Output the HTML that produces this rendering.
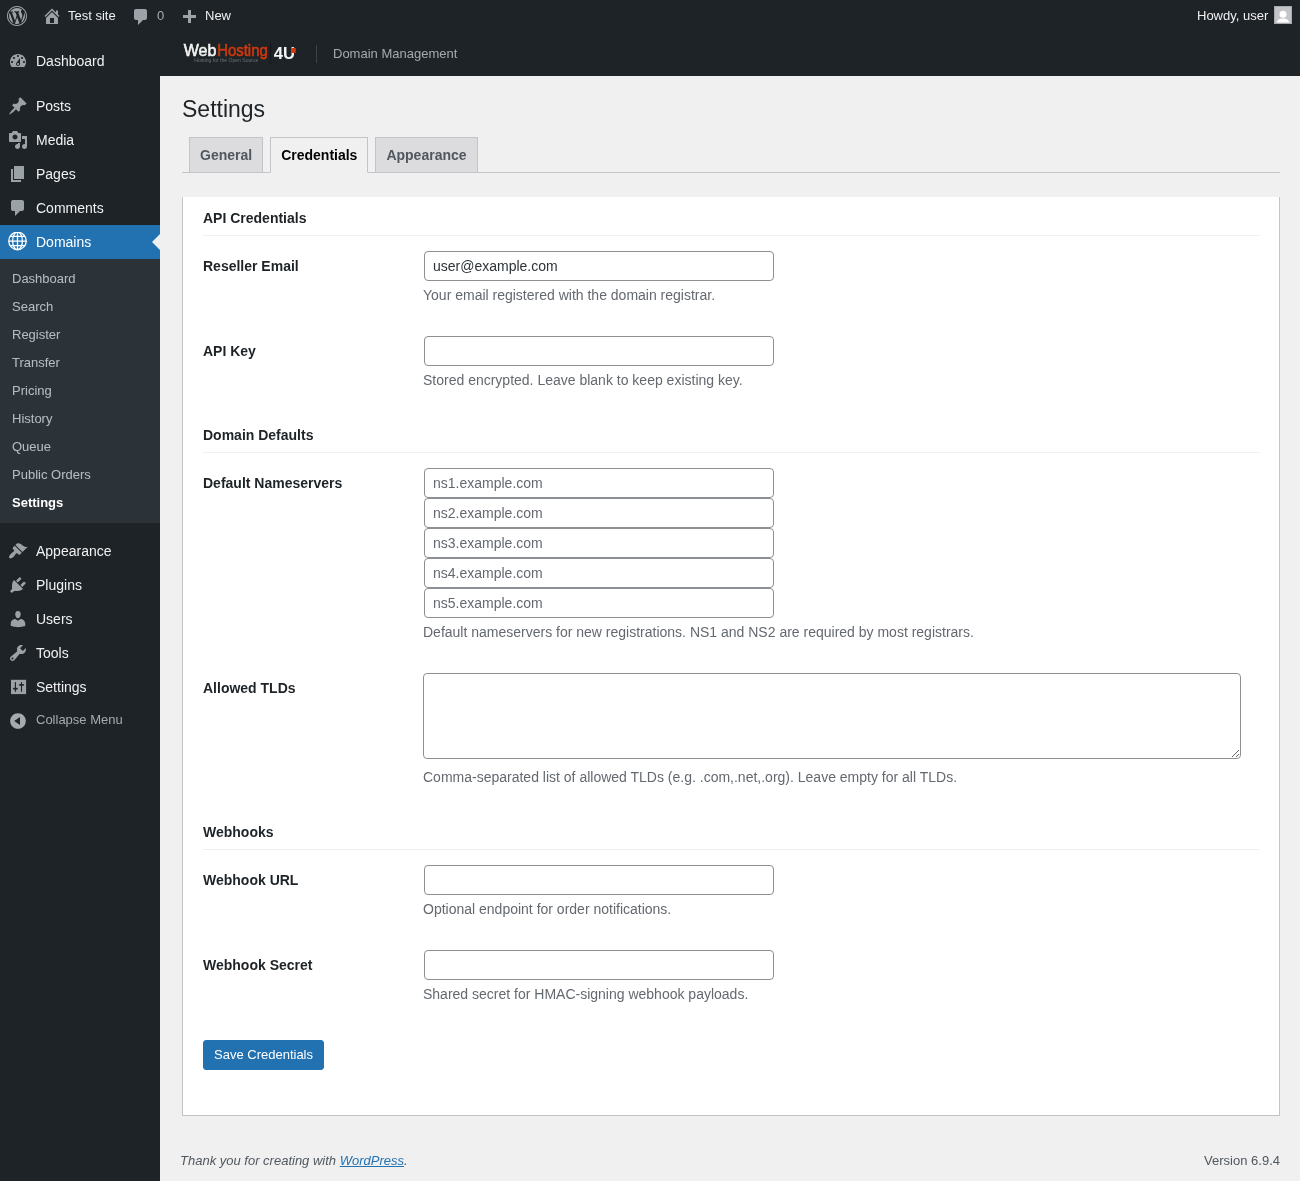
<!DOCTYPE html>
<html>
<head>
<meta charset="utf-8">
<style>
html,body{margin:0;padding:0}
body{will-change:transform;width:1300px;height:1181px;overflow:hidden;background:#f0f0f1;color:#3c434a;font-family:"Liberation Sans",sans-serif;font-size:13px;line-height:1.4em;position:relative}
/* admin bar */
#wpadminbar{position:absolute;left:0;top:0;width:1300px;height:32px;background:#1d2327;color:#f0f0f1;font-size:13px;line-height:32px}
#wpadminbar .ab{position:absolute;top:0;height:32px;white-space:nowrap}
#wpadminbar svg{position:absolute}
/* menu */
#adminmenuback{position:absolute;left:0;top:32px;width:160px;height:1149px;background:#1d2327}
#adminmenu{position:absolute;left:0;top:44px;width:160px;margin:0;padding:0;list-style:none}
#adminmenu li.menu-top{position:relative;min-height:34px}
#adminmenu a.menu-top{display:block;color:#f0f0f1;font-size:14px;line-height:18px;text-decoration:none;position:relative}
#adminmenu .wp-menu-image{position:absolute;left:0;top:0;width:36px;height:34px}
#adminmenu .wp-menu-image svg{position:absolute;left:8px;top:7px;width:20px;height:20px;fill:rgba(240,246,252,.6)}
#adminmenu .wp-menu-name{padding:8px 8px 8px 36px}
#adminmenu li.sep{height:5px;margin:0 0 6px}
#adminmenu li.current a.menu-top{background:#2271b1;color:#fff}
#adminmenu li.current .wp-menu-image svg{fill:#fff}
#adminmenu li.current a.menu-top:after{content:"";position:absolute;right:0;top:50%;margin-top:-8px;border:8px solid transparent;border-right-color:#f0f0f1}
#adminmenu ul.wp-submenu{list-style:none;margin:0;padding:6px 0 6px;background:#2c3338}
#adminmenu ul.wp-submenu a{display:block;font-size:13px;line-height:18px;padding:5px 12px;color:rgba(240,246,252,.7);text-decoration:none}
#adminmenu ul.wp-submenu li.current a{color:#fff;font-weight:600}
#collapse-menu{position:relative;color:#a7aaad;font-size:13px;line-height:34px;height:34px}
#collapse-menu svg{position:absolute;left:8px;top:7px;width:20px;height:20px;fill:#a7aaad}
#collapse-menu span{position:absolute;left:36px;top:-1px}
/* header bar */
#hdr{position:absolute;left:160px;top:32px;width:1140px;height:44px;background:#1d2327}
/* content */
#wrap{position:absolute;left:182px;top:86px;width:1098px}
h1{font-size:23px;font-weight:400;margin:0;padding:9px 0 4px;line-height:1.3;color:#1d2327}
.nav-tab-wrapper{border-bottom:1px solid #c3c4c7;margin:0;padding-top:8px;line-height:inherit;height:35px}
.nav-tab{float:left;border:1px solid #c3c4c7;border-bottom:none;margin-left:.5em;padding:5px 10px;font-size:14px;line-height:1.71428571;font-weight:600;background:#dcdcde;color:#50575e;text-decoration:none;white-space:nowrap}
.nav-tab-active{background:#f0f0f1;color:#000;border-bottom:1px solid #f0f0f1;margin-bottom:-1px}
.card{position:absolute;left:0;top:111px;width:1056px;background:#fff;border:1px solid #c3c4c7;border-top:none;padding:12px 20px 45px}
h2.sec{font-size:14px;font-weight:600;color:#1d2327;margin:20px 0 0;padding:0 0 8px;border-bottom:1px solid #f0f0f1;line-height:18px}
h2.sec.first{margin-top:0}
table.form-table{border-collapse:collapse;width:100%;margin:0}
.form-table th{width:200px;padding:21px 10px 20px 0;vertical-align:top;text-align:left;font-size:14px;font-weight:600;line-height:1.3;color:#1d2327}
.form-table td{padding:15px 10px;vertical-align:middle;line-height:1.3;font-size:14px}
input.regular-text{box-sizing:border-box;width:350px;height:30px;min-height:30px;margin:0 1px;padding:0 8px;border:1px solid #8c8f94;border-radius:4px;font-family:"Liberation Sans",sans-serif;font-size:14px;line-height:2;color:#2c3338;background:#fff;box-shadow:none;outline:none;display:block}
input::placeholder{color:#646970;opacity:1}
p.description{margin:4px 0 0;color:#646970;font-size:14px;line-height:1.5}
textarea{box-sizing:border-box;display:block;width:818px;height:86px;margin:0 0 8px;border:1px solid #8c8f94;border-radius:4px;padding:2px 6px;font-family:"Liberation Sans",sans-serif;font-size:14px;background:#fff}
.button-primary{display:inline-block;background:#2271b1;border:1px solid #2271b1;color:#fff;border-radius:3px;font-size:13px;line-height:2.15384615;min-height:30px;padding:0 10px;box-sizing:border-box;font-family:"Liberation Sans",sans-serif}
#footer{position:absolute;left:180px;top:1151px;width:1100px;font-size:13px;color:#50575e;line-height:1.55}
#footer a{color:#2271b1;text-decoration:underline}
</style>
</head>
<body>
<div id="wpadminbar">
  <svg style="left:7px;top:6px" width="20" height="20" viewBox="0 0 20 20" fill="#9ca2a7"><path d="M20 10c0-5.52-4.48-10-10-10S0 4.48 0 10s4.48 10 10 10 10-4.48 10-10zM10 1.01c4.96 0 8.99 4.02 8.99 8.99s-4.03 8.99-8.99 8.99S1.01 14.96 1.01 10 5.04 1.01 10 1.01zM8.010 14.82L4.96 6.61c.49-.03 1.05-.08 1.05-.08.43-.05.38-1.01-.06-.99 0 0-1.29.1-2.13.1-.15 0-.33 0-.52-.01 1.44-2.17 3.9-3.6 6.7-3.6 2.09 0 3.99.79 5.41 2.09-.6-.08-1.45.35-1.45 1.42 0 .66.38 1.22.79 1.88.31.54.5 1.22.5 2.21 0 1.34-1.27 4.48-1.27 4.48l-2.71-7.5c.48-.03.75-.16.75-.16.43-.05.38-1.1-.05-1.08 0 0-1.3.11-2.14.11-.78 0-2.11-.11-2.11-.11-.43-.02-.48 1.06-.05 1.08l.84.08 1.12 3.04zm6.02 2.15L16.64 10s.67-1.69.39-3.81c.63 1.14.94 2.42.94 3.81 0 2.96-1.56 5.58-3.94 6.97zM2.68 6.770L6.5 17.25c-2.67-1.3-4.47-4.08-4.47-7.25 0-1.16.2-2.23.65-3.230zm7.45 4.53l2.29 6.25c-.75.27-1.58.43-2.42.43-.72 0-1.41-.11-2.06-.32z"/></svg>
  <svg style="left:42px;top:6px" width="20" height="20" viewBox="0 0 20 20" fill="#9ca2a7"><path d="M16 8.5l1.53 1.53-1.06 1.06L10 4.62l-6.47 6.47-1.06-1.06L10 2.5l4 4v-2h2v4zm-6-2.46l6 5.99V18H4v-5.97zM12 17v-5H8v5h4z"/></svg>
  <div class="ab" style="left:68px">Test site</div>
  <svg style="left:131px;top:7px" width="20" height="20" viewBox="0 0 20 20" fill="#9ca2a7"><path d="M5 2h9c1.1 0 2 .9 2 2v7c0 1.1-.9 2-2 2h-2l-5 5v-5H5c-1.1 0-2-.9-2-2V4c0-1.1.9-2 2-2z"/></svg>
  <div class="ab" style="left:157px;color:#a7aaad">0</div>
  <svg style="left:180px;top:6px" width="20" height="20" viewBox="0 0 20 20" fill="#9ca2a7"><path d="M17 7v3h-5v5H9v-5H4V7h5V2h3v5h5z" transform="translate(-1,1.9)"/></svg>
  <div class="ab" style="left:205px">New</div>
  <div class="ab" style="left:1197px">Howdy, user</div>
  <div style="position:absolute;left:1274px;top:6px;width:18px;height:18px;background:#c3c4c7;border:1px solid #a7aaad;box-sizing:border-box;overflow:hidden"><svg width="16" height="16" viewBox="0 0 16 16" style="position:absolute;left:0;top:0"><circle cx="8" cy="7.2" r="3.5" fill="#fff"/><path d="M2 15.6c0-2.6 2.7-4.1 6-4.1s6 1.5 6 4.1z" fill="#fff"/></svg></div>
</div>

<div id="adminmenuback"></div>
<ul id="adminmenu">
  <li class="menu-top"><a class="menu-top"><div class="wp-menu-image"><svg viewBox="0 0 20 20"><path d="M3.76 16h12.48c1.1-1.37 1.76-3.11 1.76-5 0-4.42-3.58-8-8-8s-8 3.58-8 8c0 1.89.66 3.630 1.76 5zM10 4c.55 0 1 .45 1 1s-.45 1-1 1-1-.45-1-1 .45-1 1-1zM6 6c.55 0 1 .45 1 1s-.45 1-1 1-1-.45-1-1 .45-1 1-1zm8 0c.55 0 1 .45 1 1s-.45 1-1 1-1-.45-1-1 .45-1 1-1zm-5.37 5.55L12 7v6c0 1.1-.9 2-2 2s-2-.9-2-2c0-.57.24-1.08.63-1.45zM4 10c.55 0 1 .45 1 1s-.45 1-1 1-1-.45-1-1 .45-1 1-1zm12 0c.55 0 1 .45 1 1s-.45 1-1 1-1-.45-1-1 .45-1 1-1zm-5 3c0-.55-.45-1-1-1s-1 .45-1 1 .45 1 1 1 1-.45 1-1z"/></svg></div><div class="wp-menu-name">Dashboard</div></a></li>
  <li class="sep"></li>
  <li class="menu-top"><a class="menu-top"><div class="wp-menu-image"><svg viewBox="0 0 20 20"><path d="M10.44 3.02l1.82-1.82 6.36 6.35-1.83 1.82c-1.05-.68-2.48-.57-3.41.36l-.75.75c-.92.93-1.040 2.35-.35 3.41l-1.83 1.82-2.41-2.41-2.8 2.79c-.42.42-3.38 2.71-3.8 2.29s1.86-3.39 2.28-3.81l2.79-2.79L4.1 9.36l1.83-1.82c1.05.69 2.48.57 3.4-.36l.75-.75c.93-.92 1.05-2.35.36-3.41z"/></svg></div><div class="wp-menu-name">Posts</div></a></li>
  <li class="menu-top"><a class="menu-top"><div class="wp-menu-image"><svg viewBox="0 0 20 20"><path d="M13 11V4c0-.55-.45-1-1-1h-1.67L9 1H5L3.67 3H2c-.55 0-1 .45-1 1v7c0 .55.45 1 1 1h10c.55 0 1-.45 1-1zM7 4.5c1.38 0 2.5 1.12 2.5 2.5S8.38 9.5 7 9.5 4.5 8.38 4.5 7 5.62 4.5 7 4.5zM14 6h5v10.5c0 1.38-1.12 2.5-2.5 2.5S14 17.88 14 16.5s1.12-2.5 2.5-2.5c.17 0 .34.02.5.05V9h-3V6zm-4 8.05V13h2v3.5c0 1.38-1.12 2.5-2.5 2.5S7 17.88 7 16.5 8.12 14 9.5 14c.17 0 .34.02.5.05z"/></svg></div><div class="wp-menu-name">Media</div></a></li>
  <li class="menu-top"><a class="menu-top"><div class="wp-menu-image"><svg viewBox="0 0 20 20"><path d="M6 15V2h10v13H6zm-1 1h8v2H3V5h2v11z"/></svg></div><div class="wp-menu-name">Pages</div></a></li>
  <li class="menu-top"><a class="menu-top"><div class="wp-menu-image"><svg viewBox="0 0 20 20"><path d="M5 2h9c1.1 0 2 .9 2 2v7c0 1.1-.9 2-2 2h-2l-5 5v-5H5c-1.1 0-2-.9-2-2V4c0-1.1.9-2 2-2z"/></svg></div><div class="wp-menu-name">Comments</div></a></li>
  <li class="menu-top current"><a class="menu-top"><div class="wp-menu-image"><svg viewBox="0 0 20 20"><g fill="none" stroke="#fff" stroke-width="1.3"><circle cx="9.5" cy="8.9" r="8.75"/><ellipse cx="9.5" cy="8.9" rx="4.9" ry="8.75"/><path d="M9.5 0.15v17.5M2.06 4.3h14.88M0.75 9.2h17.5M2.2 13.6h14.6"/></g></svg></div><div class="wp-menu-name">Domains</div></a>
    <ul class="wp-submenu">
      <li><a>Dashboard</a></li>
      <li><a>Search</a></li>
      <li><a>Register</a></li>
      <li><a>Transfer</a></li>
      <li><a>Pricing</a></li>
      <li><a>History</a></li>
      <li><a>Queue</a></li>
      <li><a>Public Orders</a></li>
      <li class="current"><a>Settings</a></li>
    </ul>
  </li>
  <li class="sep"></li>
  <li class="menu-top"><a class="menu-top"><div class="wp-menu-image"><svg viewBox="0 0 20 20"><path d="M14.48 11.06L7.41 3.99l1.5-1.5c.5-.56 2.3-.47 3.51.32 1.21.8 1.43 1.28 2.91 2.1 1.18.64 2.45 1.26 4.45.85zm-.71.71L6.7 4.7 4.93 6.47c-.39.39-.39 1.02 0 1.41l1.06 1.06c.39.39.39 1.03 0 1.42-.6.6-1.43 1.11-2.21 1.69-.35.26-.7.53-1.01.84C1.430 14.23.4 16.08 1.4 17.07c.99 1 2.84-.03 4.18-1.36.31-.31.58-.66.85-1.02.57-.78 1.08-1.61 1.69-2.21.39-.39 1.02-.39 1.41 0l1.06 1.06c.39.39 1.02.39 1.41 0z"/></svg></div><div class="wp-menu-name">Appearance</div></a></li>
  <li class="menu-top"><a class="menu-top"><div class="wp-menu-image"><svg viewBox="0 0 20 20"><path d="M13.11 4.36L9.87 7.6 8 5.73l3.24-3.24c.35-.34 1.05-.2 1.56.32.52.51.66 1.21.31 1.55zm-8 1.77l.91-1.12 9.01 9.01-1.19.84c-.71.71-2.63 1.16-3.82 1.16H6.14L4.9 17.26c-.59.59-1.54.59-2.12 0-.59-.58-.59-1.53 0-2.12l1.24-1.24v-3.88c0-1.13.4-3.19 1.09-3.89zm7.26 3.97l3.24-3.24c.34-.35 1.04-.21 1.55.31.52.51.66 1.21.31 1.55l-3.24 3.25z"/></svg></div><div class="wp-menu-name">Plugins</div></a></li>
  <li class="menu-top"><a class="menu-top"><div class="wp-menu-image"><svg viewBox="0 0 20 20"><path d="M10 9.25c-2.27 0-2.73-3.44-2.73-3.44C7 4.020 7.82 2 9.97 2c2.16 0 2.98 2.02 2.71 3.81 0 0-.41 3.44-2.68 3.44zm0 2.57L12.72 10c2.39 0 4.52 2.33 4.52 4.53v2.49s-3.65 1.13-7.24 1.13c-3.65 0-7.24-1.13-7.24-1.13v-2.49c0-2.25 1.94-4.48 4.47-4.48z"/></svg></div><div class="wp-menu-name">Users</div></a></li>
  <li class="menu-top"><a class="menu-top"><div class="wp-menu-image"><svg viewBox="0 0 20 20"><path d="M16.68 9.77c-1.34 1.34-3.3 1.67-4.95.99l-5.41 6.52c-.99.99-2.59.99-3.58 0s-.99-2.59 0-3.57l6.52-5.42c-.68-1.65-.35-3.61.99-4.95 1.28-1.28 3.12-1.62 4.72-1.06l-2.89 2.89 2.82 2.82 2.86-2.87c.53 1.58.18 3.39-1.08 4.65zM3.81 16.21c.4.39 1.04.39 1.43 0 .4-.4.4-1.04 0-1.43-.39-.4-1.03-.4-1.43 0-.39.39-.39 1.03 0 1.430z"/></svg></div><div class="wp-menu-name">Tools</div></a></li>
  <li class="menu-top"><a class="menu-top"><div class="wp-menu-image"><svg viewBox="0 0 20 20"><rect x="3" y="2.8" width="15.1" height="14.3"/><g fill="#1d2327"><rect x="6.85" y="5.1" width="1.1" height="9.7"/><rect x="5.1" y="10.85" width="4.6" height="1.7"/><rect x="12.95" y="5.1" width="1.1" height="9.7"/><rect x="11.2" y="7.05" width="4.6" height="1.7"/></g></svg></div><div class="wp-menu-name">Settings</div></a></li>
  <li id="collapse-menu"><svg viewBox="0 0 20 20"><path d="M10 2.16c4.33 0 7.84 3.51 7.84 7.84s-3.51 7.84-7.84 7.84S2.16 14.33 2.16 10 5.71 2.16 10 2.16zm2 11.72V6.12L6.18 9.97z"/></svg><span>Collapse Menu</span></li>
</ul>

<div id="hdr">
  <svg style="position:absolute;left:20px;top:8px" width="120" height="26" viewBox="0 0 120 26">
    <text x="3.8" y="16.2" font-family="Liberation Sans" font-size="15.6" font-weight="400" fill="#f4f4f4" stroke="#f4f4f4" stroke-width="0.55" textLength="32.6" lengthAdjust="spacingAndGlyphs">Web</text>
    <text x="37.2" y="16.2" font-family="Liberation Sans" font-size="15.6" font-weight="400" fill="#cf3a0e" stroke="#cf3a0e" stroke-width="0.55" textLength="50.6" lengthAdjust="spacingAndGlyphs">Hosting</text>
    <text x="14.3" y="21.6" font-family="Liberation Sans" font-size="5.6" fill="#6d7175" textLength="64" lengthAdjust="spacingAndGlyphs">Hosting for the Open Source</text>
    <rect x="90.3" y="3" width="0.8" height="21.6" fill="#121517"/>
    <text x="93.8" y="19.1" font-family="Liberation Sans" font-size="15.8" font-weight="700" fill="#f4f4f4" textLength="21.3" lengthAdjust="spacingAndGlyphs">4U</text>
    <rect x="111.5" y="7.9" width="4.3" height="5.1" fill="#cf3a0e"/>
  </svg>
  <div style="position:absolute;left:156px;top:13px;width:1px;height:18px;background:#3c434a"></div>
  <div style="position:absolute;left:173px;top:0;line-height:44px;font-size:13px;color:#a7aaad">Domain Management</div>
</div>

<div id="wrap">
  <h1>Settings</h1>
  <div class="nav-tab-wrapper"><a class="nav-tab">General</a><a class="nav-tab nav-tab-active">Credentials</a><a class="nav-tab">Appearance</a></div>
  <div class="card">
    <h2 class="sec first">API Credentials</h2>
    <table class="form-table">
      <tr><th>Reseller Email</th><td><input class="regular-text" type="text" value="user@example.com"><p class="description">Your email registered with the domain registrar.</p></td></tr>
      <tr><th>API Key</th><td><input class="regular-text" type="text"><p class="description">Stored encrypted. Leave blank to keep existing key.</p></td></tr>
    </table>
    <h2 class="sec">Domain Defaults</h2>
    <table class="form-table">
      <tr><th>Default Nameservers</th><td><input class="regular-text" type="text" placeholder="ns1.example.com"><input class="regular-text" type="text" placeholder="ns2.example.com"><input class="regular-text" type="text" placeholder="ns3.example.com"><input class="regular-text" type="text" placeholder="ns4.example.com"><input class="regular-text" type="text" placeholder="ns5.example.com"><p class="description">Default nameservers for new registrations. NS1 and NS2 are required by most registrars.</p></td></tr>
      <tr><th>Allowed TLDs</th><td><textarea></textarea><p class="description">Comma-separated list of allowed TLDs (e.g. .com,.net,.org). Leave empty for all TLDs.</p></td></tr>
    </table>
    <h2 class="sec">Webhooks</h2>
    <table class="form-table">
      <tr><th>Webhook URL</th><td><input class="regular-text" type="text"><p class="description">Optional endpoint for order notifications.</p></td></tr>
      <tr><th>Webhook Secret</th><td><input class="regular-text" type="text"><p class="description">Shared secret for HMAC-signing webhook payloads.</p></td></tr>
    </table>
    <div style="padding-top:20px"><span class="button-primary">Save Credentials</span></div>
  </div>
</div>

<div id="footer"><span style="position:absolute;left:0;top:0;font-style:italic">Thank you for creating with <a>WordPress</a>.</span><span style="position:absolute;right:0;top:0">Version 6.9.4</span></div>
</body>
</html>
